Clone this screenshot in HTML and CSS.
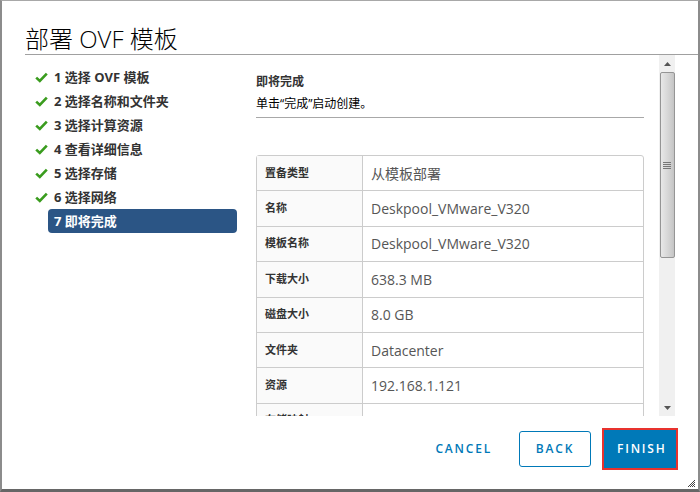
FILE: index.html
```html
<!DOCTYPE html>
<html lang="zh-CN">
<head>
<meta charset="utf-8">
<title>部署 OVF 模板</title>
<link rel="stylesheet" href="styles.css">
</head>
<body>
<div class="dialog">
  <header class="dlg-header">
    <h1 class="dlg-title">部署 OVF 模板</h1>
  </header>
  <div class="dlg-body">
    <nav class="steps">
      <div class="step"><span class="step-icon"><svg width="13" height="11" viewBox="0 0 13 11"><path d="M1.2 5.6 L4.8 9 L11.8 1.6" fill="none" stroke="#3a9c1e" stroke-width="2.6"/></svg></span><span class="step-label">1 选择 OVF 模板</span></div>
      <div class="step"><span class="step-icon"><svg width="13" height="11" viewBox="0 0 13 11"><path d="M1.2 5.6 L4.8 9 L11.8 1.6" fill="none" stroke="#3a9c1e" stroke-width="2.6"/></svg></span><span class="step-label">2 选择名称和文件夹</span></div>
      <div class="step"><span class="step-icon"><svg width="13" height="11" viewBox="0 0 13 11"><path d="M1.2 5.6 L4.8 9 L11.8 1.6" fill="none" stroke="#3a9c1e" stroke-width="2.6"/></svg></span><span class="step-label">3 选择计算资源</span></div>
      <div class="step"><span class="step-icon"><svg width="13" height="11" viewBox="0 0 13 11"><path d="M1.2 5.6 L4.8 9 L11.8 1.6" fill="none" stroke="#3a9c1e" stroke-width="2.6"/></svg></span><span class="step-label">4 查看详细信息</span></div>
      <div class="step"><span class="step-icon"><svg width="13" height="11" viewBox="0 0 13 11"><path d="M1.2 5.6 L4.8 9 L11.8 1.6" fill="none" stroke="#3a9c1e" stroke-width="2.6"/></svg></span><span class="step-label">5 选择存储</span></div>
      <div class="step"><span class="step-icon"><svg width="13" height="11" viewBox="0 0 13 11"><path d="M1.2 5.6 L4.8 9 L11.8 1.6" fill="none" stroke="#3a9c1e" stroke-width="2.6"/></svg></span><span class="step-label">6 选择网络</span></div>
      <div class="step"><span class="step-icon"></span><span class="step-label active">7 即将完成</span></div>
    </nav>
    <div class="content">
      <div class="pane">
        <div class="pane-title">即将完成</div>
        <div class="pane-desc">单击“完成”启动创建。</div>
        <table class="summary">
          <tr><th>置备类型</th><td>从模板部署</td></tr>
          <tr><th>名称</th><td>Deskpool_VMware_V320</td></tr>
          <tr><th>模板名称</th><td>Deskpool_VMware_V320</td></tr>
          <tr><th>下载大小</th><td>638.3 MB</td></tr>
          <tr><th>磁盘大小</th><td>8.0 GB</td></tr>
          <tr><th>文件夹</th><td>Datacenter</td></tr>
          <tr><th>资源</th><td>192.168.1.121</td></tr>
          <tr><th>存储映射</th><td>1</td></tr>
        </table>
      </div>
      <div class="scrollbar">
        <div class="sb-arrow"><svg width="7" height="4" viewBox="0 0 7 4"><path d="M0 4 L3.5 0 L7 4Z" fill="#555"/></svg></div>
        <div class="sb-thumb"><svg width="8" height="7" viewBox="0 0 8 7"><path d="M0 .5H8M0 2.5H8M0 4.5H8M0 6.5H8" stroke="#777" stroke-width="1"/></svg></div>
        <div class="sb-track"></div>
        <div class="sb-arrow"><svg width="7" height="4" viewBox="0 0 7 4"><path d="M0 0 L7 0 L3.5 4Z" fill="#555"/></svg></div>
      </div>
    </div>
  </div>
  <footer class="dlg-footer">
    <button class="btn btn-link">CANCEL</button>
    <button class="btn btn-outline">BACK</button>
    <button class="btn btn-primary">FINISH</button>
  </footer>
  <svg class="grip" width="10" height="10" viewBox="0 0 10 10"><path d="M9 2 L2 9 M9 4 L4 9 M9 6 L6 9 M9 8 L8 9" stroke="#444" stroke-width="1"/></svg>
</div>
</body>
</html>
```
FILE: styles.css
```css
html, body {
  margin: 0;
  padding: 0;
  background: #fff;
}
body {
  width: 700px;
  height: 492px;
  overflow: hidden;
  font-family: "Open Sans", "Noto Sans CJK SC", sans-serif;
  color: #333;
}
.dialog {
  position: relative;
  box-sizing: border-box;
  width: 700px;
  height: 492px;
  border-top: 1px solid #a8a8a8;
  border-left: 2px solid #8c8c8c;
  border-right: 2px solid #8c8c8c;
  border-bottom: 3px solid #666;
  display: flex;
  flex-direction: column;
}
.dlg-header {
  padding-left: 23px;
}
.dlg-title {
  margin: 0;
  padding-top: 23px;
  height: 30px;
  font-size: 24px;
  line-height: 30px;
  font-weight: 300;
  color: #000;
  font-family: "Open Sans", "Noto Sans CJK SC", sans-serif;
  border-bottom: 1px solid #a0a0a0;
}
.dlg-body {
  display: flex;
  height: 361px;
}
.steps {
  width: 220px;
  padding-left: 23px;
  padding-top: 10px;
  display: flex;
  flex-direction: column;
}
.step {
  display: flex;
  align-items: center;
  height: 24px;
}
.step-icon {
  box-sizing: border-box;
  width: 23px;
  padding-left: 10px;
  display: flex;
  align-items: center;
}
.step-label {
  box-sizing: border-box;
  width: 189px;
  height: 24px;
  line-height: 24px;
  padding-left: 6px;
  font-size: 13px;
  font-weight: 700;
  color: #333;
  border-radius: 4px;
}
.step-label.active {
  background: #2b5585;
  color: #fff;
}
.content {
  flex: 1;
  display: flex;
  overflow: hidden;
}
.pane {
  width: 388px;
  padding-left: 11px;
  padding-top: 18px;
  overflow: hidden;
}
.pane-title {
  font-size: 12px;
  font-weight: 700;
  line-height: 18px;
  color: #333;
}
.pane-desc {
  margin-top: 4px;
  font-size: 12px;
  line-height: 18px;
  color: #000;
  padding-bottom: 4px;
  border-bottom: 1px solid #a8a8a8;
}
.summary {
  margin-top: 37px;
  width: 388px;
  border-collapse: separate;
  border-spacing: 0;
  border: 1px solid #ccc;
  border-radius: 3px 3px 0 0;
}
.summary th,
.summary td {
  box-sizing: border-box;
  height: 35.4px;
  padding: 0;
  border-bottom: 1px solid #ccc;
  vertical-align: middle;
}
.summary th {
  width: 106px;
  padding-left: 8px;
  padding-bottom: 3px;
  text-align: left;
  font-size: 11px;
  font-weight: 700;
  color: #333;
  background: #fafafa;
  border-right: 1px solid #ccc;
}
.summary td {
  padding-left: 8px;
  font-size: 14px;
  color: #565656;
}
.scrollbar {
  margin-left: 15px;
  width: 16px;
  height: 361px;
  background: #f0f0f0;
  display: flex;
  flex-direction: column;
  align-items: center;
}
.sb-arrow {
  height: 17px;
  width: 16px;
  display: flex;
  align-items: center;
  justify-content: center;
}
.sb-thumb {
  box-sizing: border-box;
  width: 15px;
  height: 186px;
  border: 1px solid #959595;
  border-radius: 2px;
  background: linear-gradient(to right, #e8e8e8, #d4d4d4 60%, #c4c4c4);
  display: flex;
  align-items: center;
  justify-content: center;
}
.sb-track {
  flex: 1;
}
.dlg-footer {
  flex: 1;
  display: flex;
  justify-content: flex-end;
  align-items: center;
  padding-right: 22px;
  padding-bottom: 8px;
}
.btn {
  box-sizing: border-box;
  font-family: "Open Sans", sans-serif;
  font-size: 12px;
  font-weight: 600;
  letter-spacing: 1.8px;
  height: 36px;
  border-radius: 3px;
  padding: 0 12px;
  background: #fff;
  color: #0079b8;
  border: 1px solid transparent;
}
.btn-link {
  margin-right: 14px;
}
.btn-outline {
  width: 72px;
  border-color: #0079b8;
  margin-right: 13px;
}
.btn-primary {
  width: 72px;
  height: 38px;
  background: #0079b8;
  color: #fff;
  border-color: #0079b8;
  border-radius: 0;
  outline: 2px solid #e8322e;
}
.grip {
  position: absolute;
  right: 2px;
  bottom: 1px;
}
```
